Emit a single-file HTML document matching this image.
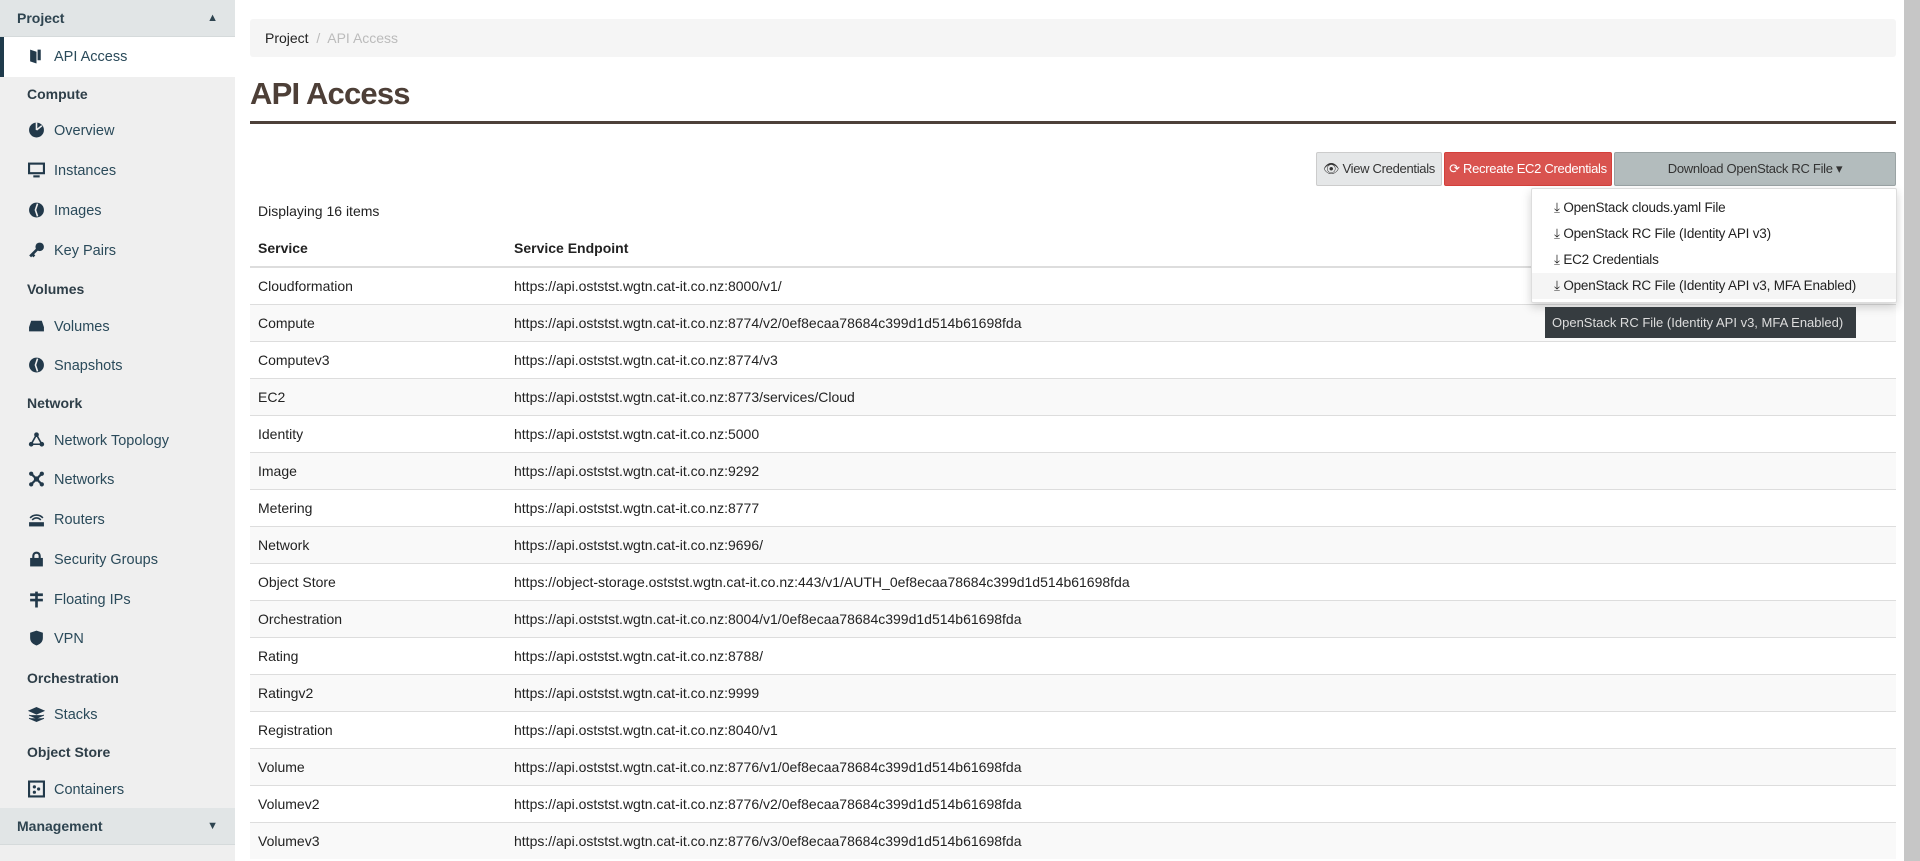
<!DOCTYPE html>
<html><head><meta charset="utf-8"><style>
*{box-sizing:border-box;margin:0;padding:0}
body{width:1920px;height:861px;overflow:hidden;background:#fff;font-family:"Liberation Sans",sans-serif;font-size:14px;color:#333;position:relative}
#side{position:absolute;left:0;top:0;width:235px;height:861px;background:#efefef}
.hd{position:absolute;left:0;width:235px;height:37px;background:#e1e5e6;color:#2e4450;font-weight:bold;font-size:14px;padding-left:17px;line-height:37px;border-bottom:1px solid #d5dadb}
.hd .c{position:absolute;right:17px;top:0;font-size:11px}
.it{position:absolute;left:54px;color:#2a4a5a;font-size:14.5px;transform:translateY(-50%)}
.ic{position:absolute;left:28px;width:17px;height:17px;transform:translateY(-50%);color:#22394a}
.gh{position:absolute;left:27px;color:#2e3e48;font-weight:bold;font-size:14px;transform:translateY(-50%)}
#act{position:absolute;left:0;top:37px;width:235px;height:40px;background:#fff;border-left:4px solid #1f3b4c}
#bc{position:absolute;left:250px;top:19px;width:1646px;height:38px;background:#f5f5f5;border-radius:3px;padding-left:15px;line-height:38px;font-size:14px;color:#222}
#bc span{color:#bbb}
h1{position:absolute;left:250px;top:76px;font-size:31px;font-weight:bold;color:#4d3f37;letter-spacing:-0.8px}
#hr{position:absolute;left:250px;top:121px;width:1646px;height:3px;background:#4d4039}
.btn{position:absolute;top:152px;height:34px;line-height:32px;border-radius:2px;font-size:13px;letter-spacing:-0.3px;text-align:center;border:1px solid;white-space:nowrap}
#disp{position:absolute;left:258px;top:203px;font-size:14px;color:#222}
table{position:absolute;left:250px;top:229px;width:1646px;border-collapse:collapse}
th{text-align:left;font-weight:bold;height:38px;border-bottom:2px solid #ddd;padding-left:8px;color:#222}
td{height:37px;padding-left:8px;border-top:1px solid #ddd;color:#222}
tr:nth-child(odd) td{background:#f9f9f9}
td.e{padding-left:0}
#dd{position:absolute;left:1531px;top:188px;width:366px;height:115px;background:#fff;border:1px solid #ddd;box-shadow:0 4px 10px rgba(0,0,0,.18);border-radius:2px}
.di{position:absolute;left:0;width:364px;height:26px;line-height:26px;padding-left:22px;font-size:13.5px;letter-spacing:-0.2px;color:#222;white-space:nowrap}
#tip{position:absolute;left:1545px;top:307px;width:311px;height:31px;background:#363c40;color:#ddd;font-size:13px;line-height:31px;padding-left:7px;white-space:nowrap}
#sb{position:absolute;right:0;top:0;width:16px;height:861px;background:#c6c6c6}
</style></head><body>
<div id="side">
<div class="hd" style="top:0">Project<span class="c">▲</span></div>
<div id="act"></div>
<svg class="ic" style="top:56px" viewBox="0 0 16 16"><path d="M2 2l6 2v11l-6-2zM9 2h3v10H9z" fill="#22394a"/></svg><div class="it" style="top:57px">API Access</div>
<div class="gh" style="top:94px">Compute</div>
<svg class="ic" style="top:130px" viewBox="0 0 16 16"><circle cx="8" cy="8" r="7" fill="#22394a"/><path d="M8 8V1M8 8l5-4" stroke="#efefef" stroke-width="1.5"/></svg><div class="it" style="top:131px">Overview</div>
<svg class="ic" style="top:170px" viewBox="0 0 16 16"><rect x="1" y="2" width="14" height="9" fill="none" stroke="#22394a" stroke-width="2"/><path d="M5 14h6" stroke="#22394a" stroke-width="2"/></svg><div class="it" style="top:171px">Instances</div>
<svg class="ic" style="top:210px" viewBox="0 0 16 16"><circle cx="8" cy="8" r="7" fill="#22394a"/><path d="M9 2L7 8l2 6" stroke="#efefef" stroke-width="1.5" fill="none"/></svg><div class="it" style="top:211px">Images</div>
<svg class="ic" style="top:250px" viewBox="0 0 16 16"><circle cx="11" cy="5" r="4" fill="#22394a"/><path d="M9 7L2 14M4 12l2 2" stroke="#22394a" stroke-width="2.5"/></svg><div class="it" style="top:251px">Key Pairs</div>
<div class="gh" style="top:289px">Volumes</div>
<svg class="ic" style="top:326px" viewBox="0 0 16 16"><path d="M3 3h10l2 6v4H1V9z" fill="#22394a"/></svg><div class="it" style="top:327px">Volumes</div>
<svg class="ic" style="top:365px" viewBox="0 0 16 16"><circle cx="8" cy="8" r="7" fill="#22394a"/><path d="M9 2L7 8l2 6" stroke="#efefef" stroke-width="1.5" fill="none"/></svg><div class="it" style="top:366px">Snapshots</div>
<div class="gh" style="top:403px">Network</div>
<svg class="ic" style="top:440px" viewBox="0 0 16 16"><path d="M8 3L3 12h10z" fill="none" stroke="#22394a" stroke-width="1.5"/><circle cx="8" cy="3" r="2.2" fill="#22394a"/><circle cx="3" cy="12" r="2.2" fill="#22394a"/><circle cx="13" cy="12" r="2.2" fill="#22394a"/></svg><div class="it" style="top:441px">Network Topology</div>
<svg class="ic" style="top:479px" viewBox="0 0 16 16"><path d="M3 3l10 10M13 3L3 13" stroke="#22394a" stroke-width="2"/><circle cx="8" cy="8" r="2.5" fill="#22394a"/><circle cx="3" cy="3" r="2" fill="#22394a"/><circle cx="13" cy="3" r="2" fill="#22394a"/><circle cx="3" cy="13" r="2" fill="#22394a"/><circle cx="13" cy="13" r="2" fill="#22394a"/></svg><div class="it" style="top:480px">Networks</div>
<svg class="ic" style="top:519px" viewBox="0 0 16 16"><path d="M2 7a8 8 0 0 1 12 0M4 9a5 5 0 0 1 8 0" stroke="#22394a" stroke-width="1.5" fill="none"/><rect x="1" y="11" width="14" height="4" fill="#22394a"/></svg><div class="it" style="top:520px">Routers</div>
<svg class="ic" style="top:559px" viewBox="0 0 16 16"><path d="M5 7V5a3 3 0 0 1 6 0v2" stroke="#22394a" stroke-width="2" fill="none"/><rect x="2" y="7" width="12" height="8" fill="#22394a"/></svg><div class="it" style="top:560px">Security Groups</div>
<svg class="ic" style="top:599px" viewBox="0 0 16 16"><path d="M2 4h12M2 9h12M8 1v15" stroke="#22394a" stroke-width="2.5"/></svg><div class="it" style="top:600px">Floating IPs</div>
<svg class="ic" style="top:638px" viewBox="0 0 16 16"><path d="M8 1l6 2v5c0 4-3 6-6 7-3-1-6-3-6-7V3z" fill="#22394a"/></svg><div class="it" style="top:639px">VPN</div>
<div class="gh" style="top:678px">Orchestration</div>
<svg class="ic" style="top:714px" viewBox="0 0 16 16"><path d="M8 2l7 3-7 3-7-3zM1 9l7 3 7-3M1 12l7 3 7-3" fill="#22394a" stroke="#22394a" stroke-width="1"/></svg><div class="it" style="top:715px">Stacks</div>
<div class="gh" style="top:752px">Object Store</div>
<svg class="ic" style="top:789px" viewBox="0 0 16 16"><rect x="1" y="1" width="14" height="14" fill="none" stroke="#22394a" stroke-width="2"/><circle cx="6" cy="6" r="1.5" fill="#22394a"/><circle cx="10" cy="8" r="1.5" fill="#22394a"/><circle cx="6" cy="11" r="1.5" fill="#22394a"/></svg><div class="it" style="top:790px">Containers</div>
<div class="hd" style="top:808px">Management<span class="c">▼</span></div>
</div>
<div id="bc">Project <span>&nbsp;/&nbsp; API Access</span></div>
<h1>API Access</h1>
<div id="hr"></div>
<div class="btn" style="left:1316px;width:126px;background:#e5e7e8;border-color:#ccc;color:#333">👁 View Credentials</div>
<div class="btn" style="left:1444px;width:168px;background:#d9534f;border-color:#d43f3a;color:#fff">⟳ Recreate EC2 Credentials</div>
<div class="btn" style="left:1614px;width:282px;background:#b3bcbd;border-color:#9aa3a4;color:#333">Download OpenStack RC File ▾</div>
<div id="disp">Displaying 16 items</div>
<table>
<tr><th style="width:264px">Service</th><th style="padding-left:0">Service Endpoint</th></tr>
<tr><td>Cloudformation</td><td class="e">https://api.oststst.wgtn.cat-it.co.nz:8000/v1/</td></tr>
<tr><td>Compute</td><td class="e">https://api.oststst.wgtn.cat-it.co.nz:8774/v2/0ef8ecaa78684c399d1d514b61698fda</td></tr>
<tr><td>Computev3</td><td class="e">https://api.oststst.wgtn.cat-it.co.nz:8774/v3</td></tr>
<tr><td>EC2</td><td class="e">https://api.oststst.wgtn.cat-it.co.nz:8773/services/Cloud</td></tr>
<tr><td>Identity</td><td class="e">https://api.oststst.wgtn.cat-it.co.nz:5000</td></tr>
<tr><td>Image</td><td class="e">https://api.oststst.wgtn.cat-it.co.nz:9292</td></tr>
<tr><td>Metering</td><td class="e">https://api.oststst.wgtn.cat-it.co.nz:8777</td></tr>
<tr><td>Network</td><td class="e">https://api.oststst.wgtn.cat-it.co.nz:9696/</td></tr>
<tr><td>Object Store</td><td class="e">https://object-storage.oststst.wgtn.cat-it.co.nz:443/v1/AUTH_0ef8ecaa78684c399d1d514b61698fda</td></tr>
<tr><td>Orchestration</td><td class="e">https://api.oststst.wgtn.cat-it.co.nz:8004/v1/0ef8ecaa78684c399d1d514b61698fda</td></tr>
<tr><td>Rating</td><td class="e">https://api.oststst.wgtn.cat-it.co.nz:8788/</td></tr>
<tr><td>Ratingv2</td><td class="e">https://api.oststst.wgtn.cat-it.co.nz:9999</td></tr>
<tr><td>Registration</td><td class="e">https://api.oststst.wgtn.cat-it.co.nz:8040/v1</td></tr>
<tr><td>Volume</td><td class="e">https://api.oststst.wgtn.cat-it.co.nz:8776/v1/0ef8ecaa78684c399d1d514b61698fda</td></tr>
<tr><td>Volumev2</td><td class="e">https://api.oststst.wgtn.cat-it.co.nz:8776/v2/0ef8ecaa78684c399d1d514b61698fda</td></tr>
<tr><td>Volumev3</td><td class="e">https://api.oststst.wgtn.cat-it.co.nz:8776/v3/0ef8ecaa78684c399d1d514b61698fda</td></tr>
</table>
<div id="dd">
<div class="di" style="top:6px">⤓ OpenStack clouds.yaml File</div>
<div class="di" style="top:32px">⤓ OpenStack RC File (Identity API v3)</div>
<div class="di" style="top:58px">⤓ EC2 Credentials</div>
<div class="di" style="top:84px;background:#f5f5f5">⤓ OpenStack RC File (Identity API v3, MFA Enabled)</div>
</div>
<div id="tip">OpenStack RC File (Identity API v3, MFA Enabled)</div>
<div id="sb"></div>
</body></html>
